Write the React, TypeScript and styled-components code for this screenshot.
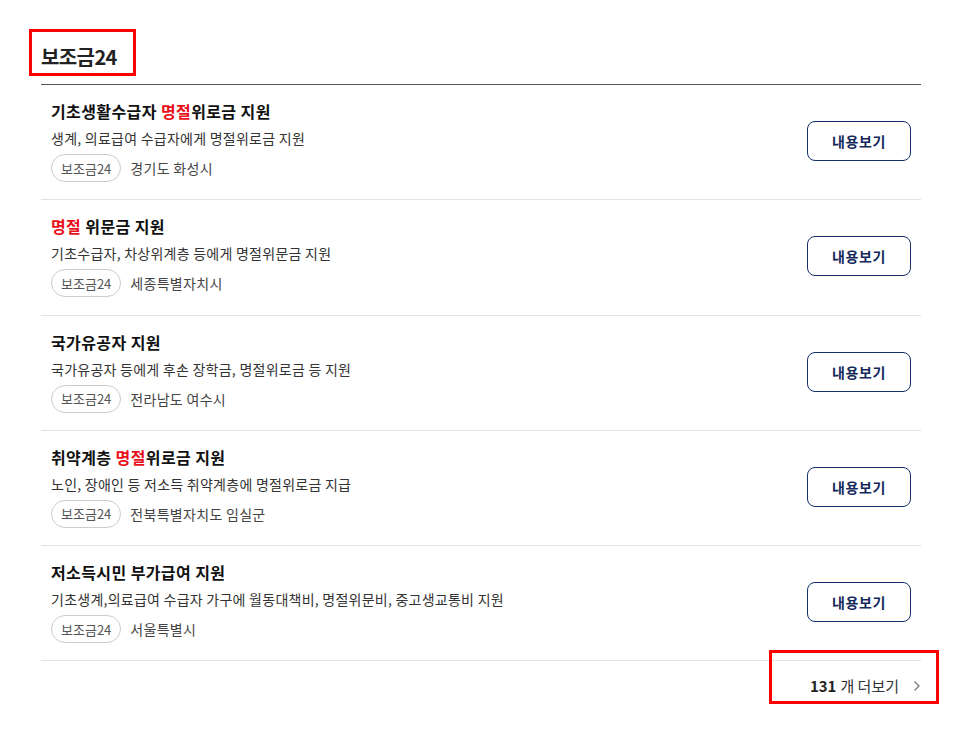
import React from 'react';
import styled, { createGlobalStyle } from 'styled-components';

const GlobalStyle = createGlobalStyle`
  html, body {
    margin: 0;
    padding: 0;
    background: #ffffff;
  }
  body {
    font-family: "Noto Sans CJK KR", "Noto Sans", sans-serif;
    color: #111111;
  }
`;

const Page = styled.div`
  box-sizing: border-box;
  min-height: 738px;
  padding: 38px 55px 0 41px;
  width: 976px;
`;

const Section = styled.section`
  position: relative;
  width: 880px;
`;

const Header = styled.div`
  position: relative;
  padding-bottom: 8px;
  border-bottom: 1px solid #555555;
`;

const Title = styled.h2`
  margin: 0;
  font-size: 20px;
  line-height: 38px;
  font-weight: 700;
  letter-spacing: -0.6px;
  color: #222222;
`;

/* red annotation frames drawn over the content */
const Highlight = styled.div<{ $top: number; $left: number; $w: number; $h: number }>`
  position: absolute;
  top: ${({ $top }) => $top}px;
  left: ${({ $left }) => $left}px;
  width: ${({ $w }) => $w}px;
  height: ${({ $h }) => $h}px;
  border: 3px solid #ff0000;
  box-sizing: border-box;
  pointer-events: none;
`;

const List = styled.ul`
  list-style: none;
  margin: 0;
  padding: 0;
`;

const Item = styled.li`
  display: flex;
  align-items: center;
  justify-content: space-between;
  padding: 15px 10px 17.25px 10px;
  border-bottom: 1px solid #e2e2e2;
`;

const Info = styled.div`
  display: flex;
  flex-direction: column;
`;

const ItemTitle = styled.h3`
  margin: 0;
  font-size: 16px;
  line-height: 22px;
  font-weight: 700;
  letter-spacing: 0.4px;
  color: #111111;
`;

const Hot = styled.span`
  color: #e8101a;
`;

const Desc = styled.p`
  margin: 6px 0 0;
  font-size: 14px;
  line-height: 20px;
  letter-spacing: 0.25px;
  color: #333333;
`;

const Meta = styled.div`
  display: flex;
  align-items: center;
  gap: 9px;
  margin-top: 6px;
`;

const Tag = styled.span`
  display: inline-flex;
  align-items: center;
  height: 28px;
  padding: 0 9px;
  box-sizing: border-box;
  border: 1px solid #cccccc;
  border-radius: 14px;
  font-size: 13px;
  letter-spacing: 0;
  color: #555555;
`;

const Region = styled.span`
  font-size: 14px;
  letter-spacing: 0.3px;
  color: #444444;
`;

const ViewButton = styled.button`
  width: 104px;
  height: 40px;
  border: 1px solid #13306a;
  border-radius: 8px;
  background: #ffffff;
  font-family: inherit;
  font-size: 14px;
  font-weight: 700;
  letter-spacing: 0.6px;
  color: #13285a;
  cursor: pointer;
  flex-shrink: 0;
`;

const Footer = styled.div`
  display: flex;
  justify-content: flex-end;
  padding: 14px 0 0;
`;

const MoreLink = styled.a`
  display: inline-flex;
  align-items: center;
  gap: 4px;
  font-size: 15px;
  line-height: 22px;
  letter-spacing: 0;
  color: #333333;
  text-decoration: none;
  cursor: pointer;

  strong {
    font-weight: 700;
    color: #222222;
  }

  svg {
    margin-left: 10px;
  }
`;

type Part = string | { hot: string };

interface Benefit {
  title: Part[];
  desc: string;
  region: string;
}

const benefits: Benefit[] = [
  {
    title: ['기초생활수급자 ', { hot: '명절' }, '위로금 지원'],
    desc: '생계, 의료급여 수급자에게 명절위로금 지원',
    region: '경기도 화성시',
  },
  {
    title: [{ hot: '명절' }, ' 위문금 지원'],
    desc: '기초수급자, 차상위계층 등에게 명절위문금 지원',
    region: '세종특별자치시',
  },
  {
    title: ['국가유공자 지원'],
    desc: '국가유공자 등에게 후손 장학금, 명절위로금 등 지원',
    region: '전라남도 여수시',
  },
  {
    title: ['취약계층 ', { hot: '명절' }, '위로금 지원'],
    desc: '노인, 장애인 등 저소득 취약계층에 명절위로금 지급',
    region: '전북특별자치도 임실군',
  },
  {
    title: ['저소득시민 부가급여 지원'],
    desc: '기초생계,의료급여 수급자 가구에 월동대책비, 명절위문비, 중고생교통비 지원',
    region: '서울특별시',
  },
];

function Chevron() {
  return (
    <svg width='8' height='12' viewBox='0 0 8 12' fill='none'>
      <path d='M1.5 1.5L6 6l-4.5 4.5' stroke='#777777' strokeWidth='1.3' />
    </svg>
  );
}

export default function App() {
  return (
    <Page>
      <GlobalStyle />
      <Section>
        <Header>
          <Title>보조금24</Title>
          <Highlight $top={-9} $left={-12} $w={107} $h={47} />
        </Header>
        <List>
          {benefits.map((b, i) => (
            <Item key={i}>
              <Info>
                <ItemTitle>
                  {b.title.map((p, j) => (typeof p === 'string' ? p : <Hot key={j}>{p.hot}</Hot>))}
                </ItemTitle>
                <Desc>{b.desc}</Desc>
                <Meta>
                  <Tag>보조금24</Tag>
                  <Region>{b.region}</Region>
                </Meta>
              </Info>
              <ViewButton type='button'>내용보기</ViewButton>
            </Item>
          ))}
        </List>
        <Footer>
          <MoreLink>
            <strong>131</strong> 개 더보기
            <Chevron />
          </MoreLink>
        </Footer>
        <Highlight $top={612} $left={728} $w={170} $h={54} />
      </Section>
    </Page>
  );
}
